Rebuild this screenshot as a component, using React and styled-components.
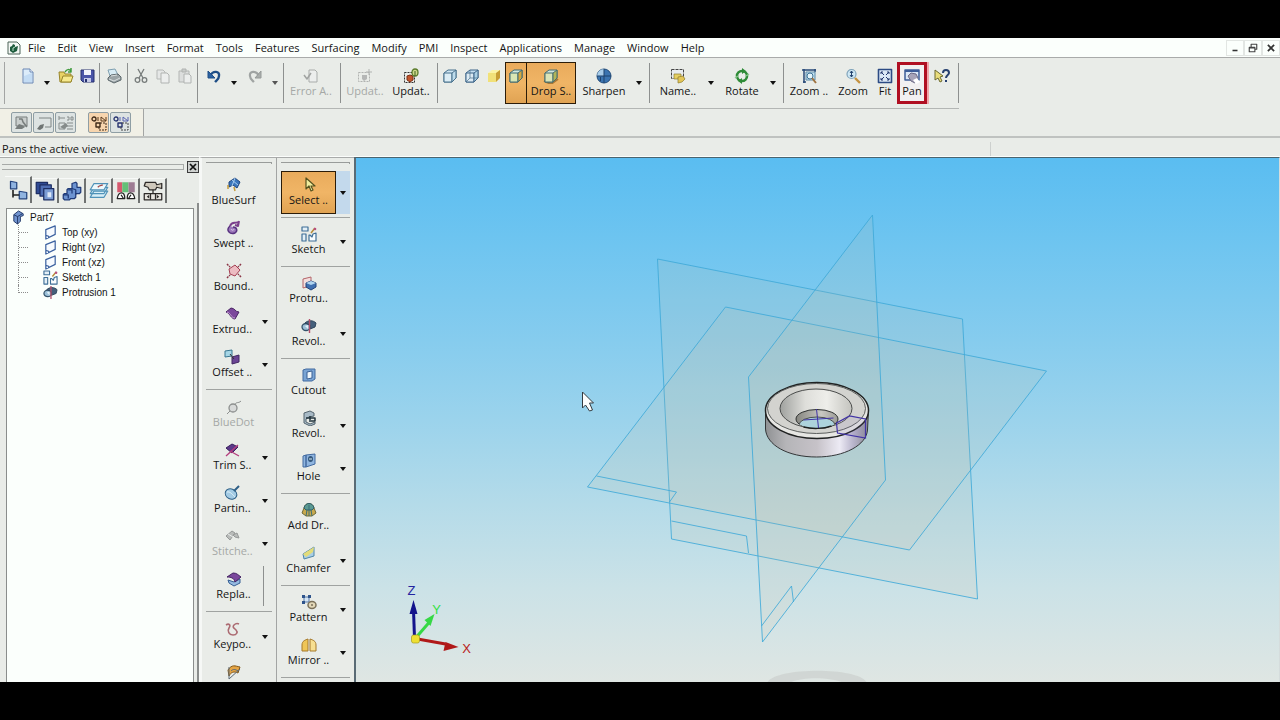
import React from "react";
import styled, { createGlobalStyle, css } from "styled-components";

const GlobalStyle = createGlobalStyle`
  * { box-sizing: border-box; }
  html, body { margin: 0; background: #000; }
  body { font-family: "Open Sans", "Noto Sans", sans-serif; font-size: 11px; line-height: 14px; color: #141414; }
  button { font: inherit; color: inherit; margin: 0; padding: 0; background: none; border: 0; }
  ul { list-style: none; margin: 0; padding: 0; }
`;

/* ---------- page frame ---------- */
const Screen = styled.div`
  display: flex;
  flex-direction: column;
  height: 100vh;
  padding: 38px 0;
  background: #000;
  overflow: hidden;
`;
const AppWindow = styled.div`
  flex: 1;
  min-height: 0;
  display: flex;
  flex-direction: column;
  background: #e9ece8;
`;

/* ---------- menu ---------- */
const MenuBar = styled.header`
  display: flex;
  align-items: center;
  height: 20px;
  padding-left: 6px;
  background: #fbfffc;
  border-bottom: 1px solid #a9abaa;
`;
const MenuNav = styled.nav`
  flex: 1;
  display: flex;
  gap: 12px;
  padding-left: 6px;
`;
const MenuItem = styled.button`
  white-space: nowrap;
`;
const WindowButton = styled.button`
  width: 18px;
  height: 16px;
  border: 1px solid #e2e6e3;
  display: grid;
  place-items: center;
`;

/* ---------- toolbar ---------- */
const Toolbar = styled.div`
  display: flex;
  align-items: flex-start;
  align-self: flex-start;
  height: 51px;
  padding: 4px 0 0;
  border-bottom: 1px solid #b3b6b4;
`;
const Grip = styled.div`
  width: 5px;
  height: 42px;
  margin-right: 12px;
  border-right: 1px solid #a3a5a4;
`;
const Divider = styled.div`
  width: 1px;
  height: ${(p) => p.$h || 40}px;
  flex: none;
  margin: 1px ${(p) => p.$after || 0}px 0 ${(p) => p.$before || 0}px;
  background: #8d908f;
`;
const tone = {
  hot: css`background: linear-gradient(#e9ab5c, #f0b566 50%, #e0a353); border: 1px solid #2b1c08;`,
  framed: css`border: 3px solid #b00f22; background: #f1f0f1; box-shadow: 2px 0 0 #f0a5ab;`,
};
const Tool = styled.button`
  display: flex;
  flex-direction: column;
  align-items: center;
  width: ${(p) => p.$w || 22}px;
  height: ${(p) => p.$h || 42}px;
  padding-top: 6px;
  white-space: nowrap;
  color: ${(p) => (p.disabled ? "#a5a8a6" : "#141414")};
  ${(p) => tone[p.$tone]}
  ${(p) => p.$tone === "hot" && css`padding-top: 5px;`}
  ${(p) => p.$tone === "framed" && css`padding-top: 3px;`}
  ${(p) => p.$joined && css`margin-right: -1px;`}
`;
const Arrow = styled.button`
  display: grid;
  place-items: center;
  width: ${(p) => p.$w || 14}px;
  height: ${(p) => p.$h || 42}px;
  background: ${(p) => (p.$lit ? "#c3d9ec" : "none")};
`;

const SubBar = styled.div`
  display: flex;
  align-items: center;
  height: 29px;
  border-bottom: 2px solid #bfc2c0;
`;
const SubGroup = styled.div`
  display: flex;
  align-items: center;
  gap: 1px;
  height: 27px;
  padding: 0 12px 0 11px;
  background: #f1f0e6;
  border-right: 1px solid #a3a5a4;
`;
const SmallTool = styled.button`
  width: 21px;
  height: 21px;
  display: grid;
  place-items: center;
  border: 1px solid #8f9ea4;
  border-radius: 2px;
  background: ${(p) => (p.$on ? "#f7d5ae" : "#dde3e2")};
  margin-left: ${(p) => (p.$start ? 11 : 0)}px;
`;
const Prompt = styled.div`
  display: flex;
  height: 19px;
  padding: 4px 0 0 2px;
  border-bottom: 1px solid #fbfdfb;
`;
const PromptText = styled.div`
  flex: 0 0 77.4%;
  border-right: 1px solid #cdd0ce;
`;

/* ---------- body ---------- */
const Body = styled.div`
  flex: 1;
  min-height: 0;
  display: flex;
`;
const EdgeBar = styled.aside`
  flex: 0 0 199px;
  display: flex;
  flex-direction: column;
  border-top: 1px solid #a9abaa;
`;
const EdgeTitle = styled.div`
  display: flex;
  align-items: center;
  gap: 3px;
  height: 18px;
  padding: 0 0 0 2px;
`;
const EdgeGrip = styled.div`
  flex: 1;
  height: 6px;
  border: 1px solid #a7aaa8;
  border-left: 0;
`;
const CloseButton = styled.button`
  width: 12px;
  height: 12px;
  display: grid;
  place-items: center;
  background: #cfd2d0;
  border: 1px solid #3b3b3b;
`;
const Tabs = styled.div`
  display: flex;
  align-items: flex-end;
  height: 27px;
  padding-left: 5px;
`;
const Tab = styled.button`
  width: 27px;
  height: ${(p) => (p.$active ? 27 : 25)}px;
  display: grid;
  place-items: center;
  border-right: 2px solid #6f7271;
  border-top: 1px solid #f8faf8;
`;
const TreeFrame = styled.div`
  flex: 1;
  min-height: 0;
  padding: 5px 3px 0 6px;
  border-right: 2px solid #8a8d8c;
`;
const Tree = styled.div`
  height: 100%;
  padding-top: 1px;
  background: #fbfffc;
  border: 1px solid #8a8d8c;
  border-bottom: 0;
  font-family: "Liberation Sans", Arial, sans-serif;
  font-size: 10px;
  line-height: 15px;
`;
const TreeRoot = styled.div`
  display: flex;
  align-items: center;
  gap: 4px;
  padding-left: 4px;
  height: 15px;
`;
const TreeRow = styled.li`
  display: flex;
  align-items: center;
  gap: 4px;
  height: 15px;
  margin-left: 11px;
  &::before {
    content: "";
    width: 10px;
    height: 15px;
    margin-right: 10px;
    border-left: 1px dotted #8c8c8c;
    background: repeating-linear-gradient(90deg, #8c8c8c 0 1px, transparent 1px 2px) 0 7px / 10px 1px no-repeat;
  }
  &:last-child::before { height: 8px; align-self: flex-start; }
`;

const Palette = styled.div`
  flex: 0 0 ${(p) => p.$w}px;
  padding: 4px 4px 0;
  overflow: hidden;
  border-left: ${(p) => (p.$first ? "3px solid #f6f8f6" : "1px solid #a3a5a4")};
  border-top: 1px solid #a9abaa;
`;
const PaletteGrip = styled.div`
  height: 2px;
  margin-bottom: 7px;
  border-top: 1px solid #999c9a;
  border-right: 1px solid #999c9a;
`;
const PaletteRow = styled.div`
  display: flex;
  height: 43px;
`;
const Rule = styled.hr`
  margin: 0;
  border: 0;
  height: ${(p) => p.$h}px;
  background: linear-gradient(#a0a3a1, #a0a3a1) 0 3px / 100% 1px no-repeat;
`;

const Viewport = styled.main`
  flex: 1;
  min-width: 0;
  border: 1px solid #49646f;
  border-left: 2px solid #5a6b75;
  border-bottom: 0;
  border-right: 1px solid #d5dcdc;
  background: linear-gradient(#5abdf1, #6fc5f0 17%, #86ccee 35%, #9bd3ec 50%, #b4dbe9 66%, #cbe2e7 82%, #dfe6e3);
`;
const Scene = styled.svg`
  display: block;
  width: 100%;
  height: 100%;
`;

/* ---------- icons (16 x 16 grid) ---------- */
const Svg = ({ children, s = 16 }) => (
  <svg width={s} height={s} viewBox="0 0 16 16" fill="none" strokeLinejoin="round" aria-hidden="true">{children}</svg>
);
const cube = (a, b, c, line) => (
  <>
    <path d="M2 5l4-3h8v8l-4 4H2z" fill={a} stroke={line} />
    <path d="M2 5h8v9H2z" fill={b} stroke={line} />
    <path d="M10 5l4-3v8l-4 4z" fill={c} stroke={line} />
  </>
);
const icons = {
  app: <><path d="M2 2h9l3 3v9H2z" fill="#f3f8f4" stroke="#4d6458" /><path d="M4 7l2-1 1-2 2 1v2l3-1-1 5-4 2-3-2z" fill="#1d5b3c" /><path d="M7 11V8l2-1" stroke="#b7e2c8" /></>,
  fresh: <><path d="M3 1h7l3 3v11H3z" fill="#dcecfa" stroke="#6b87b4" /><path d="M10 1v3h3" stroke="#6b87b4" fill="#fff" /><path d="M4 8l8-3v9H4z" fill="#c3dcf4" /></>,
  open: <><path d="M1 4h5l1 2h6v8H2z" fill="#e9d265" stroke="#97852a" /><path d="M3 14l2-6h10l-2 6z" fill="#f6e98d" stroke="#97852a" /><path d="M7 4c2-3 4-3 6-1M13 0v4h-3" stroke="#3f9a3c" strokeWidth="1.5" /></>,
  save: <><path d="M1 2h13v12H3l-2-2z" fill="#4a55a8" stroke="#26306f" /><path d="M4 2h7v5H4z" fill="#f0f2fb" /><path d="M4 10h7v4H4z" fill="#c5cae8" /><path d="M5 11h2v3H5z" fill="#26306f" /></>,
  print: <><path d="M4 8L2 2l7-1 3 6z" fill="#d8ecf5" stroke="#7e9fb0" /><path d="M2 10l3-3 7-1 3 3v3l-7 3-6-3z" fill="#9aa3a6" stroke="#5d686c" /><path d="M3 11l5 2 6-3M5 8l6-1" stroke="#d9dedf" /></>,
  cut: <><path d="M5 1l5 9M11 1L6 10" stroke="#777c7b" strokeWidth="1.3" /><circle cx="4.500" cy="12" r="2.300" stroke="#777c7b" strokeWidth="1.300" /><circle cx="11.500" cy="12" r="2.300" stroke="#777c7b" strokeWidth="1.300" /></>,
  copy: <><path d="M2 2h6l2 2v7H2z" fill="#e5e7e6" stroke="#b6b9b7" /><path d="M6 5h6l2 2v8H6z" fill="#eceeed" stroke="#b0b3b1" /></>,
  paste: <><path d="M2 3h10v11H2z" fill="#dcdedd" stroke="#b3b6b4" /><path d="M5 1h4v3H5z" fill="#c9ccca" stroke="#b0b3b1" /><path d="M7 6h5l2 2v7H7z" fill="#eceeed" stroke="#b0b3b1" /></>,
  undo: <><path d="M4 8c3-6 10-5 9 0 0 3-2 4-4 6" stroke="#1f4e86" strokeWidth="2.400" /><path d="M2 3v7h7z" fill="#2b62a3" stroke="#1f4e86" /></>,
  redo: <><path d="M12 8C9 2 2 3 3 8c0 3 2 4 4 6" stroke="#a0a4a3" strokeWidth="2.200" /><path d="M14 3v7H8z" fill="#a9adab" stroke="#969a98" /></>,
  error: <><path d="M6 2h6l2 2v10H6z" fill="#eceeed" stroke="#a9acaa" /><path d="M1 7l3 4 4-6" stroke="#a0a3a1" strokeWidth="1.500" /></>,
  updGray: <><rect x="1.500" y="4.500" width="11" height="9" stroke="#b0b3b1" strokeDasharray="2 1" /><path d="M5 7h5v4l-3 2-2-2z" fill="#b5b7b6" /><path d="M12 1v6M9 4h6" stroke="#b0b3b1" /></>,
  upd: <><rect x="1.500" y="4.500" width="10" height="10" stroke="#333" strokeDasharray="2 1" /><path d="M4 8l3-1 3 1v4l-3 2-3-2z" fill="#c2562c" stroke="#7d3016" /><ellipse cx="12" cy="4.500" rx="3" ry="3.500" fill="#cfd98a" stroke="#5a7b2a" strokeWidth="1.300" /><path d="M12 3v5" stroke="#3f6320" /></>,
  cubeWire: cube("#cfe6f3", "#dcedf5", "#bddcec", "#47708c"),
  cubeHid: <>{cube("#c3def0", "#dbeaf3", "#a9cfe4", "#3f678a")}<path d="M6 2v8h8M6 10l-4 4" stroke="#47708c" strokeWidth=".7" /></>,
  cubeYel: <><path d="M2 5l4-3h8v8l-4 4H2z" fill="#fbf4a6" /><path d="M2 5h8v9H2z" fill="#f1e179" /><path d="M10 5l4-3v8l-4 4z" fill="#c79e34" /></>,
  cubeEdge: cube("#cfe8df", "#d9e6b4", "#d5a840", "#3e6b75"),
  cubeDrop: <><path d="M1 13l7 3 7-5" stroke="#a57837" strokeWidth="2" />{cube("#cfe3dc", "#dbe5b8", "#b1b558", "#476f70")}</>,
  sharpen: <><circle cx="8" cy="8" r="7" fill="#3b74b0" stroke="#214a78" /><path d="M8 1a7 7 0 00-7 7h7z" fill="#a9cde9" /><path d="M1 8h14M8 1v14M4.500 9v4" stroke="#1e426c" /></>,
  named: <><rect x="1.500" y="1.500" width="12" height="9" stroke="#444" strokeDasharray="3 1" fill="#e8ecef" /><path d="M4 6h7v5H4z" fill="#e5cf62" stroke="#8d7b2d" strokeWidth=".7" /><path d="M8 9l5-1 2 3-3 3-4 1z" fill="#e3c657" stroke="#8d7b2d" strokeWidth=".7" /></>,
  rotate: <><ellipse cx="8" cy="8" rx="5" ry="5" stroke="#2e8b37" strokeWidth="2.600" /><path d="M8 0l4 3-4 3zM8 10l-4 3 4 3z" fill="#2e8b37" /><path d="M1 10l3-2M12 8l3-2" stroke="#87c58b" strokeWidth="1.500" /></>,
  zoomArea: <><path d="M1 2h14M3 1v14M14 1v3M2 14h3" stroke="#284a78" strokeWidth="1.500" /><rect x="5" y="4" width="9" height="8" fill="#c4e2f0" stroke="#5a89a8" /><circle cx="9" cy="8" r="3" fill="#e4f4fa" stroke="#3e7498" /><path d="M11 10l4 5" stroke="#9f7340" strokeWidth="2" /></>,
  zoom: <><circle cx="6.500" cy="6" r="4.500" fill="#cfe8f5" stroke="#7fa3ba" strokeWidth="1.200" /><path d="M6.500 3v6M5 5l1.500-2L8 5M5 7l1.500 2L8 7" stroke="#23436e" /><path d="M10 10l5 5" stroke="#c39240" strokeWidth="2.400" /></>,
  fit: <><rect x="1.500" y="1.500" width="13" height="13" fill="#dbe7f5" stroke="#2c4b84" strokeWidth="1.600" /><path d="M4 4l3 3M12 4L9 7M4 12l3-3M12 12L9 9M4 6V4h2M10 4h2v2M4 10v2h2M10 12h2v-2" stroke="#24386f" /></>,
  pan: <><path d="M1 2h14v10H1z" fill="#dae6f6" stroke="#3c5c98" strokeWidth="1.500" /><path d="M1 3h14" stroke="#3c5c98" strokeWidth="2" /><path d="M4 8l3-3 5 1 2 4-3 5-4-2z" fill="#a6a3b8" stroke="#6c6a86" /><path d="M9 12l4-2 3 4-4 2z" fill="#fff" /></>,
  help: <><path d="M1 2v10l3-2 2 4 2-1-2-4 3-1z" fill="#e9dd7b" stroke="#6c692f" /><path d="M9 5c0-4 6-4 6 0 0 2-3 2-3 5M12 12v2" stroke="#27406f" strokeWidth="2" /></>,
  s1: <><path d="M2 2h11v9H2z" stroke="#777d7c" fill="#c9cecd" /><path d="M5 4h3l1 3 4 5" stroke="#777d7c" strokeWidth="1.500" /><path d="M1 14l4-5 3 1 3 2-3 2z" fill="#777d7c" /></>,
  s2: <><path d="M3 3h12v9H9" stroke="#7f8584" /><path d="M1 14l3-4 4-1-1 4-3 2z" fill="#6f7574" /></>,
  s3: <><path d="M1 1v4M1 3h6M9 2h2v3H9M13 2h2v3h-2zM1 8h6v6H1zM9 8h6M9 11h6M9 14h6" stroke="#858b8a" /><path d="M2 12l6-4 2 3-4 3z" fill="#858b8a" /></>,
  s4: <><circle cx="3" cy="4" r="2" stroke="#3f2a18" strokeWidth="1.300" /><path d="M7 2v4M10 2l5 4M15 2v4h-5V2" stroke="#5a3a1c" /><path d="M5 8h4v4H5z" stroke="#3f2a18" strokeWidth="1.400" /><path d="M9 8h6v7H8v-3" stroke="#3f2a18" strokeDasharray="2 1" /></>,
  s5: <><circle cx="3" cy="4" r="2" stroke="#27336f" strokeWidth="1.300" /><path d="M7 2v4M10 2l5 4M15 2v4h-5V2" stroke="#5b64b0" /><path d="M5 8h4v4H5z" stroke="#27336f" strokeWidth="1.400" /><path d="M9 8h6v7H8v-3" stroke="#444" strokeDasharray="2 1" /></>,
  t1: <><path d="M2 1l5 1v5H2zM9 9l6 1v5H9z" fill="#8fb3e0" stroke="#23427c" /><path d="M4 8v6M4 12h5" stroke="#222" strokeWidth="1.300" /></>,
  t2: <><path d="M1 1h9v9H1z" fill="#2f4a93" stroke="#1c2d63" /><path d="M4 3h9v9H4z" fill="#4e6db3" stroke="#1c2d63" /><path d="M7 6h8v9H7z" fill="#7b9cd4" stroke="#1c2d63" /><rect x="10" y="9" width="3" height="4" fill="#dce8f8" /></>,
  t3: <><path d="M8 2l3-1 1 1v3h3v4l-1 1h-3v3l-1 1H7l-1 1H2l-1-1v-3l1-1h2V7l1-1h3z" fill="#6c93d1" stroke="#1f3a78" /><path d="M5 7h3v3M1 11h4v3M8 6l3 1v4" stroke="#1f3a78" /></>,
  t4: <><path d="M1 13l3-5h11l-3 5zM1 10l3-5h11l-3 5z" fill="#d7eef7" stroke="#4f92b8" /><path d="M1 7l3-5h11l-3 5z" fill="#eef9fc" stroke="#4f92b8" /><path d="M7 5c2-2 3-1 4-2" stroke="#a04848" /></>,
  t5: <><path d="M1 1h4v8H1z" fill="#d5596e" /><path d="M5 1h5v8H5z" fill="#63c077" /><path d="M10 1h5v8h-5z" fill="#9d7b93" /><path d="M1 14c1-6 6-6 6 0zM9 14c0-6 5-6 6 0z" fill="#fff" stroke="#222" /><path d="M4 11l2 3M12 11l-2 3" stroke="#222" /></>,
  t6: <><path d="M2 1h8l1 2 4-1v4l-4-1-1 2H5L4 5 1 4z" fill="#cfc8bb" stroke="#2d2a28" /><path d="M1 10h14v5H1z" fill="#e8e6e0" stroke="#2d2a28" /><path d="M5 11l-2 1.500L5 14zM11 11l2 1.500-2 1.500z" fill="#2d2a28" /><path d="M6 10v5M10 10v5M8 7v3" stroke="#2d2a28" /></>,
  part: <><path d="M3 5l5-4 5 3v2l-3 1v5l-3 3-4-3z" fill="#7094cf" stroke="#1f3564" /><path d="M3 5l4 2v8M7 7l5-3" stroke="#1f3564" /></>,
  plane: <path d="M3 5l10-4v9L3 15zM3 11l3 1v2" fill="#f7fbff" stroke="#3c62a0" strokeWidth="1.300" />,
  sketch: <><path d="M1 1h6v4H1zM1 8h4v7H1z" stroke="#3f6f97" fill="#e3eff6" strokeWidth="1.200" /><path d="M8 9v6h7V7l-3 1-1 3-2-2z" stroke="#3f6f97" fill="#fafdfe" strokeWidth="1.200" /><path d="M10 7l4-5" stroke="#b58a34" strokeWidth="1.500" /><circle cx="14" cy="3" r="1.300" fill="#b84f7d" /></>,
  revolve: <><ellipse cx="5" cy="9" rx="4" ry="3.500" fill="#9cc0d8" stroke="#34536b" strokeWidth="1.300" /><path d="M4 5c3-3 8-3 11 0l-1 4-5 2V7z" fill="#45607c" stroke="#2f465c" /><path d="M8.500 1v14" stroke="#b4506c" strokeWidth="1.400" /><path d="M4 8l3 3v-4z" fill="#e1f0f7" /></>,
  blueSurf: <><path d="M3 5l6-4 5 4-3 6-4-3-4 2z" fill="#3c77bd" stroke="#1f447d" /><path d="M6 3l6 5M9 1l-3 8" stroke="#a9cdef" /><path d="M2 8v4M8 10l1 4" stroke="#c39a3d" strokeWidth="1.500" /></>,
  swept: <><path d="M4 6c-5 4 0 9 5 7 3-2 2-6-2-6" fill="#9c78bb" stroke="#593380" strokeWidth="1.500" /><path d="M4 6c2-5 5-2 8-4M13 1l-1 5-3-1" stroke="#7b3f8c" strokeWidth="2" /><path d="M5 9c1 2 3 1 3 0" stroke="#e3d3ee" /></>,
  bound: <><path d="M3 6l6-4 5 5-5 6-5-2z" fill="#ecbcc2" stroke="#a53e52" /><path d="M1 1l3 3M15 1l-3 3M1 15l3-3M15 14l-3-3" stroke="#8b3546" strokeWidth="1.500" strokeDasharray="2 1" /></>,
  extrude: <><path d="M2 6l5-4c4 0 4 4 8 4l-4 7C7 13 6 7 2 6z" fill="#7c489c" stroke="#4a2565" /><path d="M3 6c4 1 4 6 8 6" stroke="#c9a0d8" /></>,
  offset: <><path d="M1 2l7-1v6L1 8z" fill="#a6d6e6" stroke="#397791" /><path d="M8 8l7-2v7l-7 2z" fill="#6b4494" stroke="#432863" /><path d="M6 5l4 5" stroke="#333" /></>,
  blueDot: <><circle cx="7" cy="9" r="4" fill="#d8dad9" stroke="#8d908f" strokeWidth="1.300" /><path d="M1 15l3-3M9 6c1-4 3-1 6-4" stroke="#8d908f" /></>,
  trim: <><path d="M2 6l6-4 6 3-6 6z" fill="#5c3889" stroke="#37205c" /><path d="M2 14L14 3M6 9l9 5" stroke="#b43c7c" strokeWidth="1.300" /></>,
  parting: <><ellipse cx="7" cy="9" rx="6" ry="5" transform="rotate(25 7 9)" fill="#a3cbe4" stroke="#2d5f86" /><path d="M3 7c3-1 6 3 8 5" stroke="#e4f3fa" /><path d="M10 6l5-5" stroke="#2d5f86" strokeWidth="2" /></>,
  stitch: <><path d="M2 8l6-5 3 2-5 7zM9 7l4-2 2 5-4-1z" fill="#b9bcba" stroke="#969998" /><path d="M4 6l5 3" stroke="#e9ecea" /></>,
  replace: <><path d="M2 9l6 2 6-3v4l-6 3-5-3z" fill="#95b9e0" stroke="#365f94" /><path d="M1 6l6-4c4 0 5 2 8 4l-6 5C8 7 5 6 1 6z" fill="#7a479c" stroke="#452463" /></>,
  keypoint: <path d="M2 4c3-2 5 0 3 3s0 7 4 7 5-3 3-5-4-3-2-5 3-2 5-1" stroke="#ac6b72" strokeWidth="1.600" />,
  surfLast: <><path d="M2 6c4-6 7-4 12-3l-2 6c-4-2-7-1-9 3z" fill="#e5a545" stroke="#84591b" /><path d="M3 3v12L14 5M5 7c2-2 4-2 7 0" stroke="#5c6a76" /></>,
  select: <path d="M5 1v11l3-3 2 5 2-1-2-4h4z" fill="#f1ee9f" stroke="#55521e" strokeWidth="1.200" />,
  protrude: <><path d="M2 4l8-2v9l-8 2z" fill="#f3dede" stroke="#b46569" /><path d="M5 8l5-2 5 2v4l-5 3-5-3z" fill="#3f6fb0" stroke="#24447a" /><path d="M5 8l5-2 5 2-5 2z" fill="#b0d4ef" /></>,
  cutout: <><path d="M2 3l3-1h9v10l-3 2H2z" fill="#79a4d4" stroke="#426aa0" /><path d="M6 5l5-1v7l-5 1z" fill="#eef6fc" stroke="#395f94" /></>,
  revCut: <><path d="M3 3l6-2 4 2v3L8 7 5 9v3l4 2 5-2v2l-5 2-6-3z" fill="#a8bac6" stroke="#55656f" /><path d="M5 8h9v3H8M9 6v4" stroke="#22343e" strokeWidth="1.500" /></>,
  hole: <><path d="M2 3l3-1v12H2zM5 2l9-1v10l-9 3z" fill="#8fb5df" stroke="#426aa0" /><ellipse cx="9.500" cy="6" rx="2.500" ry="3" fill="#34587c" /><path d="M8 6h3" stroke="#d7ecf7" /></>,
  draft: <><path d="M3 6c1-6 9-6 10 0l2 5-4 3H5l-4-3z" fill="#c9a94c" stroke="#6d6a3a" /><path d="M3 6c1-6 9-6 10 0l-2 2H5z" fill="#5b9a92" stroke="#2f5f6b" /><path d="M6 8l-1 6M8 3v11M10 8l1 6" stroke="#3b6f78" /></>,
  chamfer: <><path d="M2 9L13 2v9L3 14z" fill="#a9cee5" stroke="#5087a8" /><path d="M2 9L13 2l-1 5-7 5z" fill="#e3dc78" /></>,
  pattern: <><path d="M3 3h5v5H3z" fill="#d5e6f5" stroke="#5b7ba8" /><path d="M1 1h3v3H1zM7 1h3v3H7zM1 7h3v3H1z" fill="#2e548c" /><ellipse cx="11" cy="11" rx="4" ry="3.500" fill="#e3d8b8" stroke="#7b715a" strokeWidth="1.500" /><circle cx="11" cy="11" r="1" fill="#7b715a" /></>,
  mirror: <><path d="M7 2v12H1V8c0-4 3-5 6-6z" fill="#efc557" stroke="#a5782a" /><path d="M9 2v12h6V8c0-4-3-5-6-6z" fill="#f7df91" stroke="#a5782a" /></>,
};
const Icon = ({ name, s }) => <Svg s={s}>{icons[name]}</Svg>;
const Caret = ({ dim }) => (
  <svg width="6" height="4" viewBox="0 0 6 4" aria-hidden="true"><path d="M0 0h6L3 4z" fill={dim ? "#555" : "#111"} /></svg>
);

/* ---------- data ---------- */
const menus = ["File", "Edit", "View", "Insert", "Format", "Tools", "Features", "Surfacing", "Modify", "PMI", "Inspect", "Applications", "Manage", "Window", "Help"];
const toolbar = [
  { icon: "fresh", tip: "New" }, { arrow: true, w: 16 }, { icon: "open", tip: "Open" }, { icon: "save", tip: "Save" },
  { sep: [0, 0] }, { icon: "print", tip: "Print", w: 27 }, { sep: [0, 2] },
  { icon: "cut", tip: "Cut" }, { icon: "copy", tip: "Copy" }, { icon: "paste", tip: "Paste" }, { sep: [1, 2] },
  { icon: "undo", tip: "Undo", w: 27 }, { arrow: true }, { icon: "redo", tip: "Redo", w: 27 }, { arrow: true, dim: true }, { sep: [1, 3] },
  { icon: "error", label: "Error A..", w: 48, off: true }, { sep: [5, 2] },
  { icon: "updGray", label: "Updat..", w: 44, off: true }, { icon: "upd", label: "Updat..", w: 48 }, { sep: [2, 1] },
  { icon: "cubeWire", tip: "Visible edges" }, { icon: "cubeHid", tip: "Hidden edges" }, { icon: "cubeYel", tip: "Shaded" },
  { icon: "cubeEdge", tip: "Shaded with edges", tone: "hot", joined: true }, { icon: "cubeDrop", label: "Drop S..", w: 50, tone: "hot" },
  { icon: "sharpen", label: "Sharpen", w: 56 }, { arrow: true }, { sep: [3, 2] },
  { icon: "named", label: "Name..", w: 52 }, { arrow: true }, { icon: "rotate", label: "Rotate", w: 48 }, { arrow: true }, { sep: [3, 1] },
  { icon: "zoomArea", label: "Zoom ..", w: 48 }, { icon: "zoom", label: "Zoom", w: 40 }, { icon: "fit", label: "Fit", w: 24 },
  { icon: "pan", label: "Pan", w: 30, tone: "framed" }, { icon: "help", tip: "Help", w: 30 }, { sep: [1, 0] },
];
const surfacing = [
  ["blueSurf", "BlueSurf"], ["swept", "Swept .."], ["bound", "Bound.."], ["extrude", "Extrud..", 1], ["offset", "Offset ..", 1], null,
  ["blueDot", "BlueDot", 0, 1], ["trim", "Trim S..", 1], ["parting", "Partin..", 1], ["stitch", "Stitche..", 1, 1], ["replace", "Repla..", 2], null,
  ["keypoint", "Keypo..", 1], ["surfLast", ""],
];
const features = [
  ["select", "Select ..", 1, 0, "hot"], null, ["sketch", "Sketch", 1], null, ["protrude", "Protru.."], ["revolve", "Revol..", 1], null,
  ["cutout", "Cutout"], ["revCut", "Revol..", 1], ["hole", "Hole", 1], null, ["draft", "Add Dr.."], ["chamfer", "Chamfer", 1], null,
  ["pattern", "Pattern", 1], ["mirror", "Mirror ..", 1], null,
];
const tree = [["plane", "Top (xy)"], ["plane", "Right (yz)"], ["plane", "Front (xz)"], ["sketch", "Sketch 1"], ["revolve", "Protrusion 1"]];
const tabs = [["t1", "PathFinder"], ["t2", "Feature Library"], ["t3", "Family of Parts"], ["t4", "Layers"], ["t5", "Sensors"], ["t6", "Playback"]];

const PaletteItems = ({ items, ruleHeight }) =>
  items.map((it, i) =>
    it === null ? (
      <Rule key={i} $h={ruleHeight} />
    ) : (
      <PaletteRow key={i}>
        <Tool $w={55} $h={43} $tone={it[4]} disabled={!!it[3]} aria-label={it[1] || "More"}><Icon name={it[0]} />{it[1]}</Tool>
        {it[2] === 1 && <Arrow $w={14} $h={43} $lit={it[4] === "hot"} aria-label={it[1] + " options"}><Caret /></Arrow>}
        {it[2] === 2 && <Divider $before={2} />}
      </PaletteRow>
    )
  );

const Model = () => (
  <Scene viewBox="356 158 922 524" preserveAspectRatio="xMidYMid meet" role="img" aria-label="Part view">
    <defs>
      <linearGradient id="side" x1="0" x2="1"><stop offset="0" stopColor="#8f9193" /><stop offset=".2" stopColor="#b5b5b8" /><stop offset=".5" stopColor="#c6c2c8" /><stop offset=".72" stopColor="#eceaf4" /><stop offset=".85" stopColor="#b9b5cc" /><stop offset="1" stopColor="#8a8a92" /></linearGradient>
      <linearGradient id="bowl" x1="0" x2="1"><stop offset="0" stopColor="#9fa19e" /><stop offset=".35" stopColor="#dededa" /><stop offset=".65" stopColor="#eeeeea" /><stop offset="1" stopColor="#c3c3be" /></linearGradient>
      <linearGradient id="bore" x1="0" x2="1"><stop offset="0" stopColor="#85857f" /><stop offset=".6" stopColor="#c9c8c2" /><stop offset="1" stopColor="#9b9b96" /></linearGradient>
      <clipPath id="boreClip"><ellipse cx="816.500" cy="419" rx="21" ry="9.500" /></clipPath>
    </defs>
    <g fill="#cfc2a0" fillOpacity=".13" stroke="#3fa9d8" strokeOpacity=".85">
      <path d="M657 259L962 319 977 599 671 539z" />
      <path d="M725 307L1046 371 909 550 587 487z" />
      <path d="M872 215L885 480 762 642 748 377z" />
    </g>
    <g stroke="#3fa9d8" strokeOpacity=".85" fill="none">
      <path d="M596 476L676 492 669 502M671 521L746 536 748 553M761 626L791 586 793 602" />
    </g>
    <path d="M765 411v18c1 16 22 28 51 28 28 0 50-12 51-27l1-19z" fill="url(#side)" stroke="#333638" />
    <ellipse cx="816.500" cy="410.500" rx="51.500" ry="28" fill="#e6e6e3" stroke="#202222" strokeWidth="1.500" />
    <ellipse cx="816" cy="408.500" rx="49" ry="25" fill="#d3d3cf" stroke="#4d504f" strokeWidth=".9" />
    <ellipse cx="815.500" cy="408.500" rx="36" ry="19.500" fill="url(#bowl)" stroke="#4a4c4b" />
    <ellipse cx="816.500" cy="419" rx="21" ry="9.500" fill="url(#bore)" stroke="#2f3231" />
    <ellipse cx="816.500" cy="425" rx="18" ry="8" fill="#add3dc" stroke="#4a4c4b" clipPath="url(#boreClip)" />
    <path d="M803 427c8 2 20 2 28-1" stroke="#1d2020" strokeWidth="1.500" fill="none" />
    <path d="M816 409l2 19M803 420l30-2" stroke="#4032a5" fill="none" />
    <path d="M836 423l13-7 16 3v19l-28-5z" stroke="#4032a5" strokeWidth="1.200" fill="#8073c0" fillOpacity=".12" />
    <path d="M767 682c10-15 90-15 99 0h-25c-14-5-38-5-50 0z" fill="#cdd2d0" opacity=".8" />
    <path d="M414 638l-1-28" stroke="#14148c" strokeWidth="3" /><path d="M413 600l4 14h-8z" fill="#14148c" />
    <path d="M416 637l13-15" stroke="#35d845" strokeWidth="3" /><path d="M434 614l-4 12-6-6z" fill="#35d845" />
    <path d="M417 639l28 5" stroke="#b01818" strokeWidth="3" /><path d="M458 647l-15 4 2-9z" fill="#b01818" />
    <rect x="411" y="635" width="8" height="8" rx="2" fill="#eee032" stroke="#a59b20" strokeWidth=".7" />
    <g fontFamily='"Liberation Sans", Arial, sans-serif' fontSize="13" textAnchor="middle">
      <text x="411" y="595" fill="#2424a0">Z</text>
      <text x="436" y="614" fill="#35e045">Y</text>
      <text x="466" y="653" fill="#b82020">X</text>
    </g>
    <path d="M582 392v16l3-3 4 6 3-1-3-7h4z" fill="#fbfdfd" stroke="#333b40" strokeLinejoin="round" />
  </Scene>
);

export default function App() {
  return (
    <>
      <GlobalStyle />
      <Screen>
        <AppWindow>
          <MenuBar>
            <Icon name="app" />
            <MenuNav>{menus.map((m) => <MenuItem key={m}>{m}</MenuItem>)}</MenuNav>
            <WindowButton aria-label="Minimize"><Svg s={10}><path d="M4 12h8" stroke="#333" strokeWidth="2.500" /></Svg></WindowButton>
            <WindowButton aria-label="Restore"><Svg s={10}><path d="M2 7h9v7H2zM5 6V2h9v8h-3M2 8h9" stroke="#444" strokeWidth="1.800" /></Svg></WindowButton>
            <WindowButton aria-label="Close"><Svg s={10}><path d="M3 3l10 10M13 3L3 13" stroke="#333" strokeWidth="2.800" /></Svg></WindowButton>
          </MenuBar>
          <Toolbar>
            <Grip />
            {toolbar.map((t, i) => {
              if (t.sep) return <Divider key={i} $before={t.sep[0]} $after={t.sep[1]} />;
              if (t.arrow) return <Arrow key={i} $w={t.w} aria-label="Options"><Caret dim={t.dim} /></Arrow>;
              return (
                <Tool key={i} $w={t.w} $tone={t.tone} $joined={t.joined} disabled={t.off} aria-label={t.tip}>
                  <Icon name={t.icon} />{t.label}
                </Tool>
              );
            })}
          </Toolbar>
          <SubBar>
            <SubGroup>
              <SmallTool aria-label="Edit definition"><Icon name="s1" /></SmallTool>
              <SmallTool aria-label="Edit profile"><Icon name="s2" /></SmallTool>
              <SmallTool aria-label="Dynamic edit"><Icon name="s3" /></SmallTool>
              <SmallTool $start $on aria-label="Select inside"><Icon name="s4" /></SmallTool>
              <SmallTool aria-label="Select overlapping"><Icon name="s5" /></SmallTool>
            </SubGroup>
          </SubBar>
          <Prompt><PromptText>Pans the active view.</PromptText></Prompt>
          <Body>
            <EdgeBar>
              <EdgeTitle>
                <EdgeGrip />
                <CloseButton aria-label="Close panel"><Svg s={8}><path d="M2 2l12 12M14 2L2 14" stroke="#111" strokeWidth="3.500" /></Svg></CloseButton>
              </EdgeTitle>
              <Tabs>
                {tabs.map(([name, tip], i) => (
                  <Tab key={name} $active={i === 0} aria-label={tip}><Icon name={name} s={20} /></Tab>
                ))}
              </Tabs>
              <TreeFrame>
                <Tree>
                  <TreeRoot><Icon name="part" s={15} />Part7</TreeRoot>
                  <ul>{tree.map(([icon, text]) => <TreeRow key={text}><Icon name={icon} s={15} />{text}</TreeRow>)}</ul>
                </Tree>
              </TreeFrame>
            </EdgeBar>
            <Palette $w={77} $first>
              <PaletteGrip />
              <PaletteItems items={surfacing} ruleHeight={7} />
            </Palette>
            <Palette $w={78}>
              <PaletteGrip />
              <PaletteItems items={features} ruleHeight={6} />
            </Palette>
            <Viewport><Model /></Viewport>
          </Body>
        </AppWindow>
      </Screen>
    </>
  );
}
